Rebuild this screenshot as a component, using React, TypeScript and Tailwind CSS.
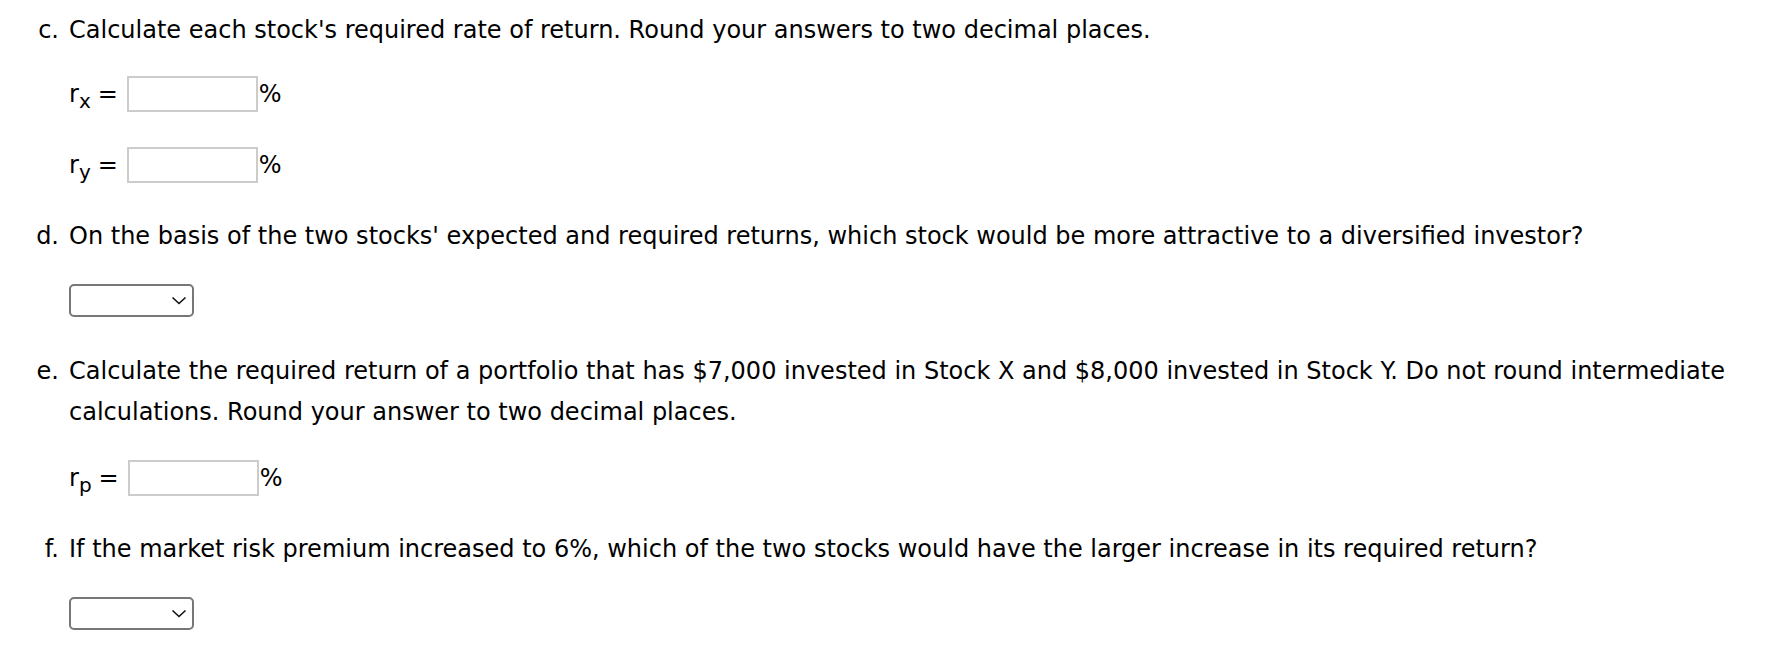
import * as React from 'react';

const Question: React.FC<{ label: string; className?: string; children: React.ReactNode }> = ({ label, className, children }) => (
    <div className={`flex ${className ?? ''}`}>
        <span className="w-[69px] shrink-0 pr-[10px] text-right">{label}</span>
        <div className="flex-1">{children}</div>
    </div>
);

const RateInput: React.FC<{ sub: string; className?: string }> = ({ sub, className }) => (
    <div className={`flex items-center h-[36px] ${className ?? ''}`}>
        <span className="leading-none">
            r<span className="relative top-[6px] text-[20px]">{sub}</span>
        </span>
        <span className="ml-[7px] leading-none">=</span>
        <input
            type="text"
            className="ml-[9px] w-[131px] h-[36px] border-2 border-[#cccccc] bg-white outline-none"
        />
        <span className="ml-[1px] leading-none">%</span>
    </div>
);

const Dropdown: React.FC<{ className?: string }> = ({ className }) => (
    <div className={`w-[125px] h-[33px] border-2 border-[#777777] rounded-[5px] bg-white flex items-center justify-end pr-[5px] ${className ?? ''}`}>
        <svg width="16" height="9" viewBox="0 0 16 9" fill="none">
            <path d="M1.5 1.5l6.5 6 6.5-6" stroke="#111" strokeWidth="1.6" />
        </svg>
    </div>
);

export default function App() {
    return (
        <div className="bg-white w-[1792px] h-[658px] pt-[10px] pr-[40px] text-[24px] leading-[41px] text-black font-['DejaVu_Sans',Verdana,sans-serif]">
            <Question label="c.">
                <p>Calculate each stock's required rate of return. Round your answers to two decimal places.</p>
                <RateInput sub="x" className="mt-[25px]" />
                <RateInput sub="y" className="mt-[35px]" />
            </Question>

            <Question label="d." className="mt-[33px]">
                <p>On the basis of the two stocks' expected and required returns, which stock would be more attractive to a diversified investor?</p>
                <Dropdown className="mt-[27px]" />
            </Question>

            <Question label="e." className="mt-[34px]">
                <p>
                    Calculate the required return of a portfolio that has $7,000 invested in Stock X and $8,000 invested in Stock Y. Do not round intermediate calculations. Round your answer to two decimal places.
                </p>
                <RateInput sub="p" className="mt-[27px]" />
            </Question>

            <Question label="f." className="mt-[33px]">
                <p>If the market risk premium increased to 6%, which of the two stocks would have the larger increase in its required return?</p>
                <Dropdown className="mt-[27px]" />
            </Question>
        </div>
    );
}
